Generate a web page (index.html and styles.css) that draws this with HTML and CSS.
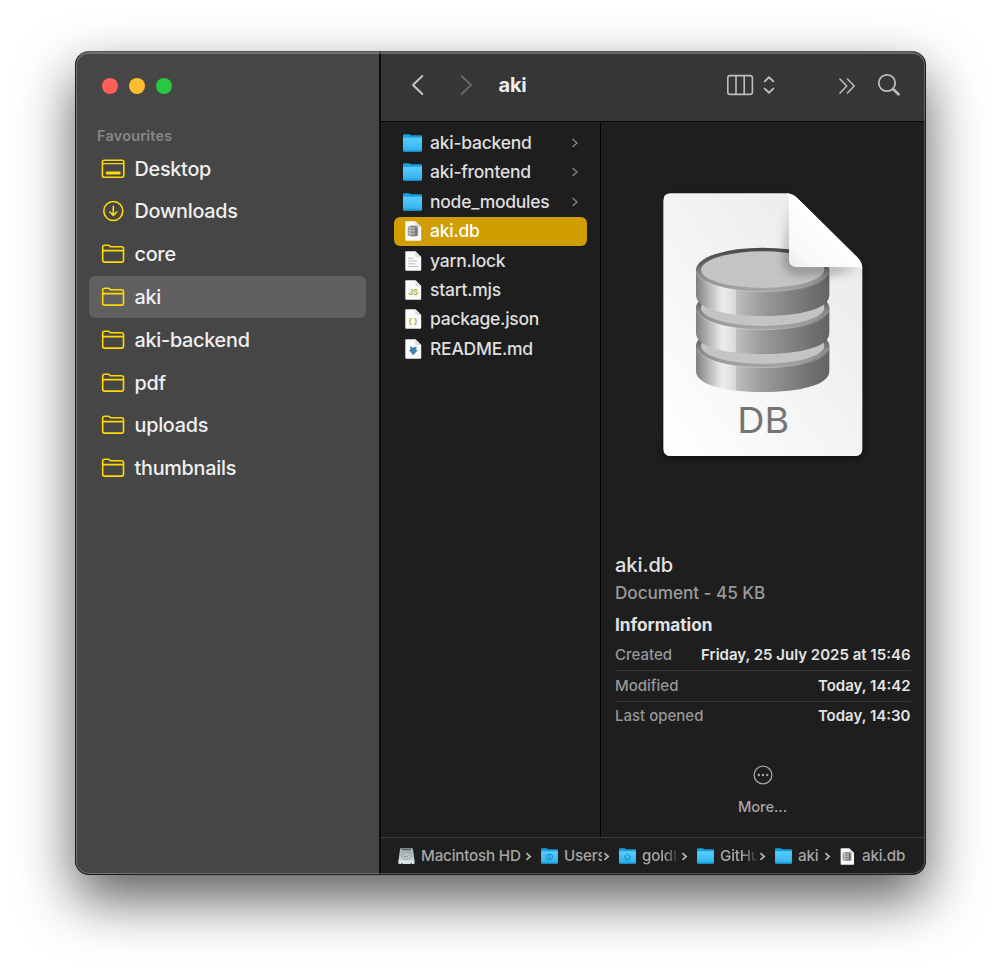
FILE: index.html
```html
<!DOCTYPE html>
<html lang="en-GB">
<head>
<meta charset="utf-8">
<title>aki</title>
<link rel="stylesheet" href="styles.css">
</head>
<body>
<svg class="defs" aria-hidden="true">
  <defs>
    <linearGradient id="blue" x1="0" y1="0" x2="0" y2="1"><stop offset="0" stop-color="#5accfb"/><stop offset="1" stop-color="#2fb3ee"/></linearGradient>
    <linearGradient id="disk" x1="0" y1="0" x2="0" y2="1"><stop offset="0" stop-color="#a3adb2"/><stop offset="1" stop-color="#c9d3d8"/></linearGradient>
    <linearGradient id="paper" x1="1" y1="0" x2="0" y2="1"><stop offset="0" stop-color="#e8e8e8"/><stop offset="1" stop-color="#ffffff"/></linearGradient>
    <linearGradient id="metal"><stop offset="0" stop-color="#808080"/><stop offset=".1" stop-color="#b8b8b8"/><stop offset=".2" stop-color="#eeeeee"/><stop offset=".295" stop-color="#dadada"/><stop offset=".305" stop-color="#bdbdbd"/><stop offset=".5" stop-color="#9a9a9a"/><stop offset="1" stop-color="#626262"/></linearGradient>
    <linearGradient id="rim" x1="0" y1="0" x2="0" y2="1"><stop offset="0" stop-color="#484848"/><stop offset=".35" stop-color="#606060"/><stop offset=".6" stop-color="#8a8a8a"/><stop offset="1" stop-color="#a6a6a6"/></linearGradient>
    <linearGradient id="curl" x1="0" y1="1" x2=".6" y2=".4"><stop offset="0" stop-color="#e8e8e8"/><stop offset=".35" stop-color="#f8f8f8"/><stop offset="1" stop-color="#ffffff"/></linearGradient>
    <filter id="soft" x="-30%" y="-30%" width="160%" height="160%"><feGaussianBlur stdDeviation="16"/></filter>
    <filter id="lift" x="-20%" y="-20%" width="140%" height="140%"><feGaussianBlur stdDeviation="9"/></filter>
    <symbol id="i-folder-line" viewBox="0 0 24 20"><path d="M1.7 16.2V3.1C1.7 1.9 2.4 1.3 3.5 1.3H7.3C8.6 1.3 9 2.8 10.3 2.8H20.7C21.8 2.8 22.5 3.4 22.5 4.6V16.2C22.5 17.4 21.8 18.1 20.7 18.1H3.5C2.4 18.1 1.7 17.4 1.7 16.2ZM1.7 6.6H22.5" fill="none" stroke="currentColor" stroke-width="1.6"/></symbol>
    <symbol id="i-desktop" viewBox="0 0 24 20"><rect x="1.4" y="1.2" width="21.4" height="17" rx="2" fill="none" stroke="currentColor" stroke-width="1.6"/><path d="M1.4 4.6H22.8" stroke="currentColor" stroke-width="1.4"/><rect x="4.9" y="12.5" width="14.6" height="3" rx=".7" fill="currentColor"/></symbol>
    <symbol id="i-download" viewBox="0 0 24 22"><g fill="none" stroke="currentColor" stroke-width="1.6" stroke-linecap="round" stroke-linejoin="round"><circle cx="12.3" cy="11" r="9.5"/><path d="M12.3 6.4V15.2M8.8 12L12.3 15.4L15.8 12"/></g></symbol>
    <symbol id="i-folder" viewBox="0 0 19 18"><path d="M0 1.3Q0 .3 1 .3H6Q7 .3 7.7 1.3H18Q19 1.3 19 2.3V6H0Z" fill="#179fe0"/><path d="M0 3.7H19V16.4Q19 17.5 18 17.5H1Q0 17.5 0 16.4Z" fill="url(#blue)"/><path d="M0 15.5H19V16.4Q19 17.5 18 17.5H1Q0 17.5 0 16.4Z" fill="#22a5e3"/></symbol>
    <symbol id="i-sheet" viewBox="0 0 17 20"><path d="M.3 1.2Q.3.3 1.2.3H10.5L16.2 6V18.8Q16.2 19.7 15.3 19.7H1.2Q.3 19.7.3 18.8Z" fill="#fafafa"/><path d="M10.4.3V5.2Q10.4 6 11.2 6H16.2Z" fill="#dedede"/></symbol>
    <symbol id="i-db" viewBox="0 0 17 20"><use href="#i-sheet"/><path d="M2.8 5.8Q8 3.4 13.2 5.8V14.2Q8 16.6 2.8 14.2Z" fill="#8b8b8b"/><path d="M5 5.3V14.9" stroke="#c9c9c9"/><path d="M3 6.4Q8 8.4 13 6.4M2.8 9Q8 11 13.2 9M2.8 12Q8 14 13.2 12" stroke="#d2d2d2" stroke-width=".8" fill="none"/><path d="M11 6.3V14.7" stroke="#5a5a5a" stroke-width="1.2"/></symbol>
    <symbol id="i-chev" viewBox="0 0 8 10"><path d="M1.5 1L6 5L1.5 9" fill="none" stroke="currentColor" stroke-width="1.4"/></symbol>
    <symbol id="i-sep" viewBox="0 0 7 9"><path d="M1.4 1.2L5.2 4.5L1.4 7.8" fill="none" stroke="currentColor" stroke-width="1.7"/></symbol>
  </defs>
</svg>
<main class="window">
  <aside class="sidebar">
    <div class="lights"><i class="light close"></i><i class="light min"></i><i class="light max"></i></div>
    <h2 class="side-title">Favourites</h2>
    <nav class="places">
      <a class="place"><svg class="pi"><use href="#i-desktop"/></svg><span>Desktop</span></a>
      <a class="place"><svg class="pi tall"><use href="#i-download"/></svg><span>Downloads</span></a>
      <a class="place"><svg class="pi"><use href="#i-folder-line"/></svg><span>core</span></a>
      <a class="place on"><svg class="pi"><use href="#i-folder-line"/></svg><span>aki</span></a>
      <a class="place"><svg class="pi"><use href="#i-folder-line"/></svg><span>aki-backend</span></a>
      <a class="place"><svg class="pi"><use href="#i-folder-line"/></svg><span>pdf</span></a>
      <a class="place"><svg class="pi"><use href="#i-folder-line"/></svg><span>uploads</span></a>
      <a class="place"><svg class="pi"><use href="#i-folder-line"/></svg><span>thumbnails</span></a>
    </nav>
  </aside>
  <section class="content">
    <header class="toolbar">
      <svg class="nav-ic" viewBox="0 0 14 22"><path d="M11.3 2L2 11L11.3 20" fill="none" stroke="#c4c4c4" stroke-width="2" stroke-linecap="round" stroke-linejoin="round"/></svg>
      <svg class="nav-ic fwd" viewBox="0 0 14 22"><path d="M2.5 2L12 11L2.5 20" fill="none" stroke="#686868" stroke-width="2" stroke-linecap="round" stroke-linejoin="round"/></svg>
      <h1 class="title">aki</h1>
      <svg class="cols-ic" viewBox="0 0 28 22"><g fill="none" stroke="#bdbdbd" stroke-width="1.6"><rect x="1.8" y="1.6" width="24.6" height="18.8" rx="2.4"/><path d="M10 1.6V20.4M18.2 1.6V20.4"/></g></svg>
      <svg class="sort-ic" viewBox="0 0 12 20"><path d="M1.7 6.4L6 2.2L10.3 6.4M1.7 13.6L6 17.8L10.3 13.6" fill="none" stroke="#bdbdbd" stroke-width="2" stroke-linecap="round" stroke-linejoin="round"/></svg>
      <svg class="more-ic" viewBox="0 0 18 18"><path d="M2 2L8.8 9L2 16M9.4 2L16.2 9L9.4 16" fill="none" stroke="#bdbdbd" stroke-width="1.6" stroke-linecap="round" stroke-linejoin="round"/></svg>
      <svg class="find-ic" viewBox="0 0 24 24"><circle cx="10" cy="10" r="8.2" fill="none" stroke="#bdbdbd" stroke-width="1.8"/><path d="M16 16L21.5 21.2" stroke="#bdbdbd" stroke-width="2.7" stroke-linecap="round"/></svg>
    </header>
    <div class="browser">
      <ul class="files">
        <li class="file"><svg class="fi"><use href="#i-folder"/></svg><span>aki-backend</span><svg class="chev"><use href="#i-chev"/></svg></li>
        <li class="file"><svg class="fi"><use href="#i-folder"/></svg><span>aki-frontend</span><svg class="chev"><use href="#i-chev"/></svg></li>
        <li class="file"><svg class="fi"><use href="#i-folder"/></svg><span>node_modules</span><svg class="chev"><use href="#i-chev"/></svg></li>
        <li class="file on"><svg class="fi doc"><use href="#i-db"/></svg><span>aki.db</span></li>
        <li class="file"><svg class="fi doc" viewBox="0 0 17 20"><use href="#i-sheet"/><path d="M3 7.3H9M3 10H12M3 12.8H10.5M3 15.6H13" stroke="#bcbcbc" stroke-width="1"/></svg><span>yarn.lock</span></li>
        <li class="file"><svg class="fi doc" viewBox="0 0 17 20"><use href="#i-sheet"/><text class="glyph" x="8.4" y="15.4">JS</text></svg><span>start.mjs</span></li>
        <li class="file"><svg class="fi doc" viewBox="0 0 17 20"><use href="#i-sheet"/><text class="glyph" x="8.2" y="14.6">{ }</text></svg><span>package.json</span></li>
        <li class="file"><svg class="fi doc" viewBox="0 0 17 20"><use href="#i-sheet"/><path d="M5.2 7.2L8.3 8.8L11.4 7.2V11H12.8L8.3 16.3L3.8 11H5.2Z" fill="#3f83a6"/></svg><span>README.md</span></li>
      </ul>
      <section class="preview">
        <svg class="art" viewBox="0 0 690 870">
          <defs>
            <path id="sheet" d="M62 40H405Q428 40 444 56L622 232Q637 247 637 268V806Q637 828 615 828H62Q40 828 40 806V62Q40 40 62 40Z"/>
            <clipPath id="sheet-clip"><use href="#sheet"/></clipPath>
            <g id="drum">
              <path d="M138 270V345C138 388 228 408 338 408S538 388 538 345V270Z" fill="url(#metal)"/>
              <ellipse cx="338" cy="269" rx="200" ry="66" fill="url(#rim)"/>
              <ellipse cx="338" cy="269" rx="185" ry="55" fill="#c4c4c4"/>
              <path d="M140 278C152 316 240 335 338 335S524 316 536 278" fill="none" stroke="#ffffff" stroke-opacity=".25" stroke-width="3"/>
            </g>
          </defs>
          <path d="M62 46H405L637 268V810Q637 834 615 834H62Q40 834 40 810Z" fill="#000" opacity=".5" filter="url(#lift)"/>
          <use href="#sheet" fill="url(#paper)"/>
          <use href="#drum" y="228"/>
          <use href="#drum" y="114"/>
          <use href="#drum"/>
          <g clip-path="url(#sheet-clip)"><path d="M425 60V245Q425 261 437 261H630L560 276H440Q412 274 408 245Z" fill="#000" opacity=".55" filter="url(#soft)"/></g>
          <path d="M405 40Q417 42 417 56V240Q417 261 439 261H620Q634 261 637 268Q637 247 622 232L444 56Q428 40 405 40Z" fill="url(#curl)"/>
          <text class="ext" x="340" y="758" textLength="156" lengthAdjust="spacingAndGlyphs">DB</text>
        </svg>
        <h2 class="name">aki.db</h2>
        <p class="kind">Document - 45 KB</p>
        <h3 class="info-title">Information</h3>
        <dl class="info">
          <div class="row"><dt>Created</dt><dd>Friday, 25 July 2025 at 15:46</dd></div>
          <div class="row"><dt>Modified</dt><dd>Today, 14:42</dd></div>
          <div class="row"><dt>Last opened</dt><dd>Today, 14:30</dd></div>
        </dl>
        <div class="more">
          <svg class="dots" viewBox="0 0 20 20"><circle cx="10" cy="10" r="8.9" fill="none" stroke="#a5a5a5" stroke-width="1.3"/><g fill="#a5a5a5"><circle cx="5.8" cy="10" r="1.2"/><circle cx="10" cy="10" r="1.2"/><circle cx="14.2" cy="10" r="1.2"/></g></svg>
          <span>More...</span>
        </div>
      </section>
    </div>
    <footer class="path">
      <svg class="hd" viewBox="0 0 17 17"><path d="M2.2.3H14.8L16.6 13H.4Z" fill="url(#disk)"/><path d="M4 1.6H13" stroke="#5d666a" stroke-width="1.3"/><rect x=".4" y="12.6" width="16.2" height="3.4" rx=".8" fill="#dce4e8"/><ellipse cx="8.5" cy="7.6" rx="4.8" ry="3.9" fill="none" stroke="#8a9499" stroke-width=".8"/><path d="M6 8.2Q8.5 10.2 10.6 7.4" fill="none" stroke="#7c868b" stroke-width=".9"/><path d="M3 15.6H4.5M12.5 15.6H14" stroke="#596166"/></svg>
      <span class="crumb c1">Macintosh HD</span><svg class="sep s1"><use href="#i-sep"/></svg>
      <svg class="pf" viewBox="0 0 19 18"><use href="#i-folder"/><g fill="none" stroke="#178dc8" stroke-width="1.1"><circle cx="9.5" cy="10.2" r="3.5"/><circle cx="9.5" cy="9.3" r="1"/><path d="M7.2 12.6Q9.5 10.5 11.8 12.6"/></g></svg>
      <span class="crumb c2">Users</span><svg class="sep s2"><use href="#i-sep"/></svg>
      <svg class="pf" viewBox="0 0 19 18"><use href="#i-folder"/><path d="M5.8 10.2L9.5 6.8L13.2 10.2M7 9.6V13.5H12V9.6M9.5 13.5V11" fill="none" stroke="#178dc8" stroke-width="1.1"/></svg>
      <span class="crumb c3 fade">goldl</span><svg class="sep s3"><use href="#i-sep"/></svg>
      <svg class="pf"><use href="#i-folder"/></svg>
      <span class="crumb c4 fade">GitHu</span><svg class="sep s4"><use href="#i-sep"/></svg>
      <svg class="pf"><use href="#i-folder"/></svg>
      <span class="crumb c5">aki</span><svg class="sep s5"><use href="#i-sep"/></svg>
      <svg class="pd"><use href="#i-db"/></svg>
      <span class="crumb c6">aki.db</span>
    </footer>
  </section>
</main>
</body>
</html>
```
FILE: styles.css
```css
* { box-sizing: border-box; }
body { margin: 0; background: #fff; font-family: Inter, "Liberation Sans", sans-serif; height: 973px; overflow: hidden; padding: 51px 0 0 75px; }
h1, h2, h3, p, ul, dl, dd { margin: 0; padding: 0; }
svg { display: block; flex: none; }
.defs { width: 0; height: 0; position: absolute; }
.window { width: 851px; height: 824px; border-radius: 14px; display: flex; overflow: hidden; background: #1e1e1e; border: 1px solid #1c1c1c; border-top-color: #555; box-shadow: 0 24px 55px rgba(0,0,0,.64); position: relative; }
.window::after { content: ""; position: absolute; inset: 0; border-radius: 13px; border: 1px solid rgba(255,255,255,.24); border-top: 2px solid rgba(255,255,255,.24); pointer-events: none; }
.sidebar { width: 305px; background: #464646; border-right: 2px solid #0c0c0c; padding: 26px 13px 0; }
.lights { display: flex; gap: 11px; padding-left: 13px; height: 16px; }
.light { width: 16px; height: 16px; border-radius: 50%; }
.close { background: #ff5f57; }
.min { background: #febc2e; }
.max { background: #28c840; }
.side-title { font-size: 14.4px; line-height: 20px; font-weight: 600; letter-spacing: .25px; color: #878787; padding-left: 8px; margin-top: 32px; height: 21.2px; }
.place { display: flex; align-items: center; gap: 10px; height: 42.8px; padding-left: 11.5px; border-radius: 6px; color: #f0f0f0; font-size: 19.8px; font-weight: 450; line-height: 24px; letter-spacing: -.25px; width: 277px; }
.place.on { background: #606060; }
.pi { width: 24px; height: 20px; color: #ffd900; }
.pi.tall { height: 22px; }
.content { flex: 1; min-width: 0; display: flex; flex-direction: column; }
.toolbar { height: 70px; background: #363636; border-bottom: 1px solid #080808; display: flex; align-items: center; padding: 0 23px 3px 30px; }
.nav-ic { width: 14px; height: 22px; }
.fwd { margin-left: 34px; }
.title { font-size: 20px; line-height: 24px; font-weight: 700; letter-spacing: -.2px; color: #ececec; margin-left: 25.5px; width: 227px; }
.cols-ic { width: 28px; height: 22px; }
.sort-ic { width: 12px; height: 20px; margin-left: 9px; }
.more-ic { width: 18px; height: 18px; margin-left: 63px; margin-top: 2px; }
.find-ic { width: 24px; height: 24px; margin-left: 21px; }
.browser { flex: 1; display: flex; min-height: 0; }
.files { list-style: none; width: 220px; border-right: 1px solid #000; padding: 6.7px 13px 0; }
.file { display: flex; align-items: center; height: 29.43px; width: 193px; padding: 0 8px 1px 9px; border-radius: 6px; font-size: 17.5px; font-weight: 450; line-height: 22px; letter-spacing: -.25px; color: #dfdfdf; }
.file span { flex: 1; white-space: nowrap; }
.file.on { background: #d09e00; color: #fff; }
.fi { width: 19px; height: 18px; margin-right: 8px; }
.fi.doc { width: 17px; height: 20px; margin: 0 8px 0 2px; }
.file .fi.doc { position: relative; left: -.5px; }
.chev { width: 8px; height: 10px; color: #828282; }
.glyph { font: 700 7.8px Inter, sans-serif; letter-spacing: 0; fill: #b6b32e; text-anchor: middle; }
.preview { flex: 1; padding: 0 15px 0 14px; }
.art { width: 230px; height: 290px; margin: 58px 0 0 35px; }
.ext { font: 400 107px Inter, sans-serif; fill: #757575; text-anchor: middle; }
.name { font-size: 20px; line-height: 24px; font-weight: 500; letter-spacing: -.05px; color: #e2e2e2; margin-top: 83px; }
.kind { font-size: 17.2px; font-weight: 450; line-height: 22px; letter-spacing: -.07px; color: #9a9a9a; margin-top: 5px; }
.info-title { font-size: 17.2px; line-height: 22px; font-weight: 700; color: #e2e2e2; margin-top: 10px; }
.info { margin-top: 4px; width: 295.5px; }
.row { display: flex; justify-content: space-between; height: 30.8px; align-items: center; font-size: 15px; line-height: 20px; border-bottom: 1px solid #343434; white-space: nowrap; }
.row:last-child { border: 0; padding-bottom: 1px; }
.row dt { color: #979797; font-weight: 500; }
.row dd { color: #e4e4e4; font-weight: 600; }
.more { display: flex; flex-direction: column; align-items: center; gap: 12px; margin-top: 33px; width: 295px; color: #a5a5a5; font-size: 14.7px; font-weight: 500; letter-spacing: -.1px; line-height: 20px; }
.dots { width: 20px; height: 20px; }
.path { height: 37px; border-top: 1px solid #3a3a3a; display: flex; align-items: center; padding-left: 17px; font-size: 15.2px; font-weight: 450; letter-spacing: -.2px; line-height: 20px; color: #a6a6a6; }
.crumb { white-space: nowrap; overflow: hidden; }
.hd { width: 17px; height: 17px; margin-right: 6px; }
.pf { width: 17px; height: 16px; margin-right: 6px; }
.pd { width: 15px; height: 17px; margin-right: 7px; }
.sep { width: 7px; height: 9px; color: #b2b2b2; }
.c1 { width: 102px; }
.c2 { width: 38px; }
.c3 { width: 36px; }
.c4 { width: 37px; }
.c5 { width: 24px; }
.s1, .s5 { margin: 0 9px 0 2px; }
.s2 { margin: 0 9px 0 1px; }
.s3 { margin: 0 9px 0 3px; }
.s4 { margin: 0 9px 0 2px; }
.fade { -webkit-mask-image: linear-gradient(90deg, #000 60%, transparent 105%); mask-image: linear-gradient(90deg, #000 60%, transparent 105%); }
```
